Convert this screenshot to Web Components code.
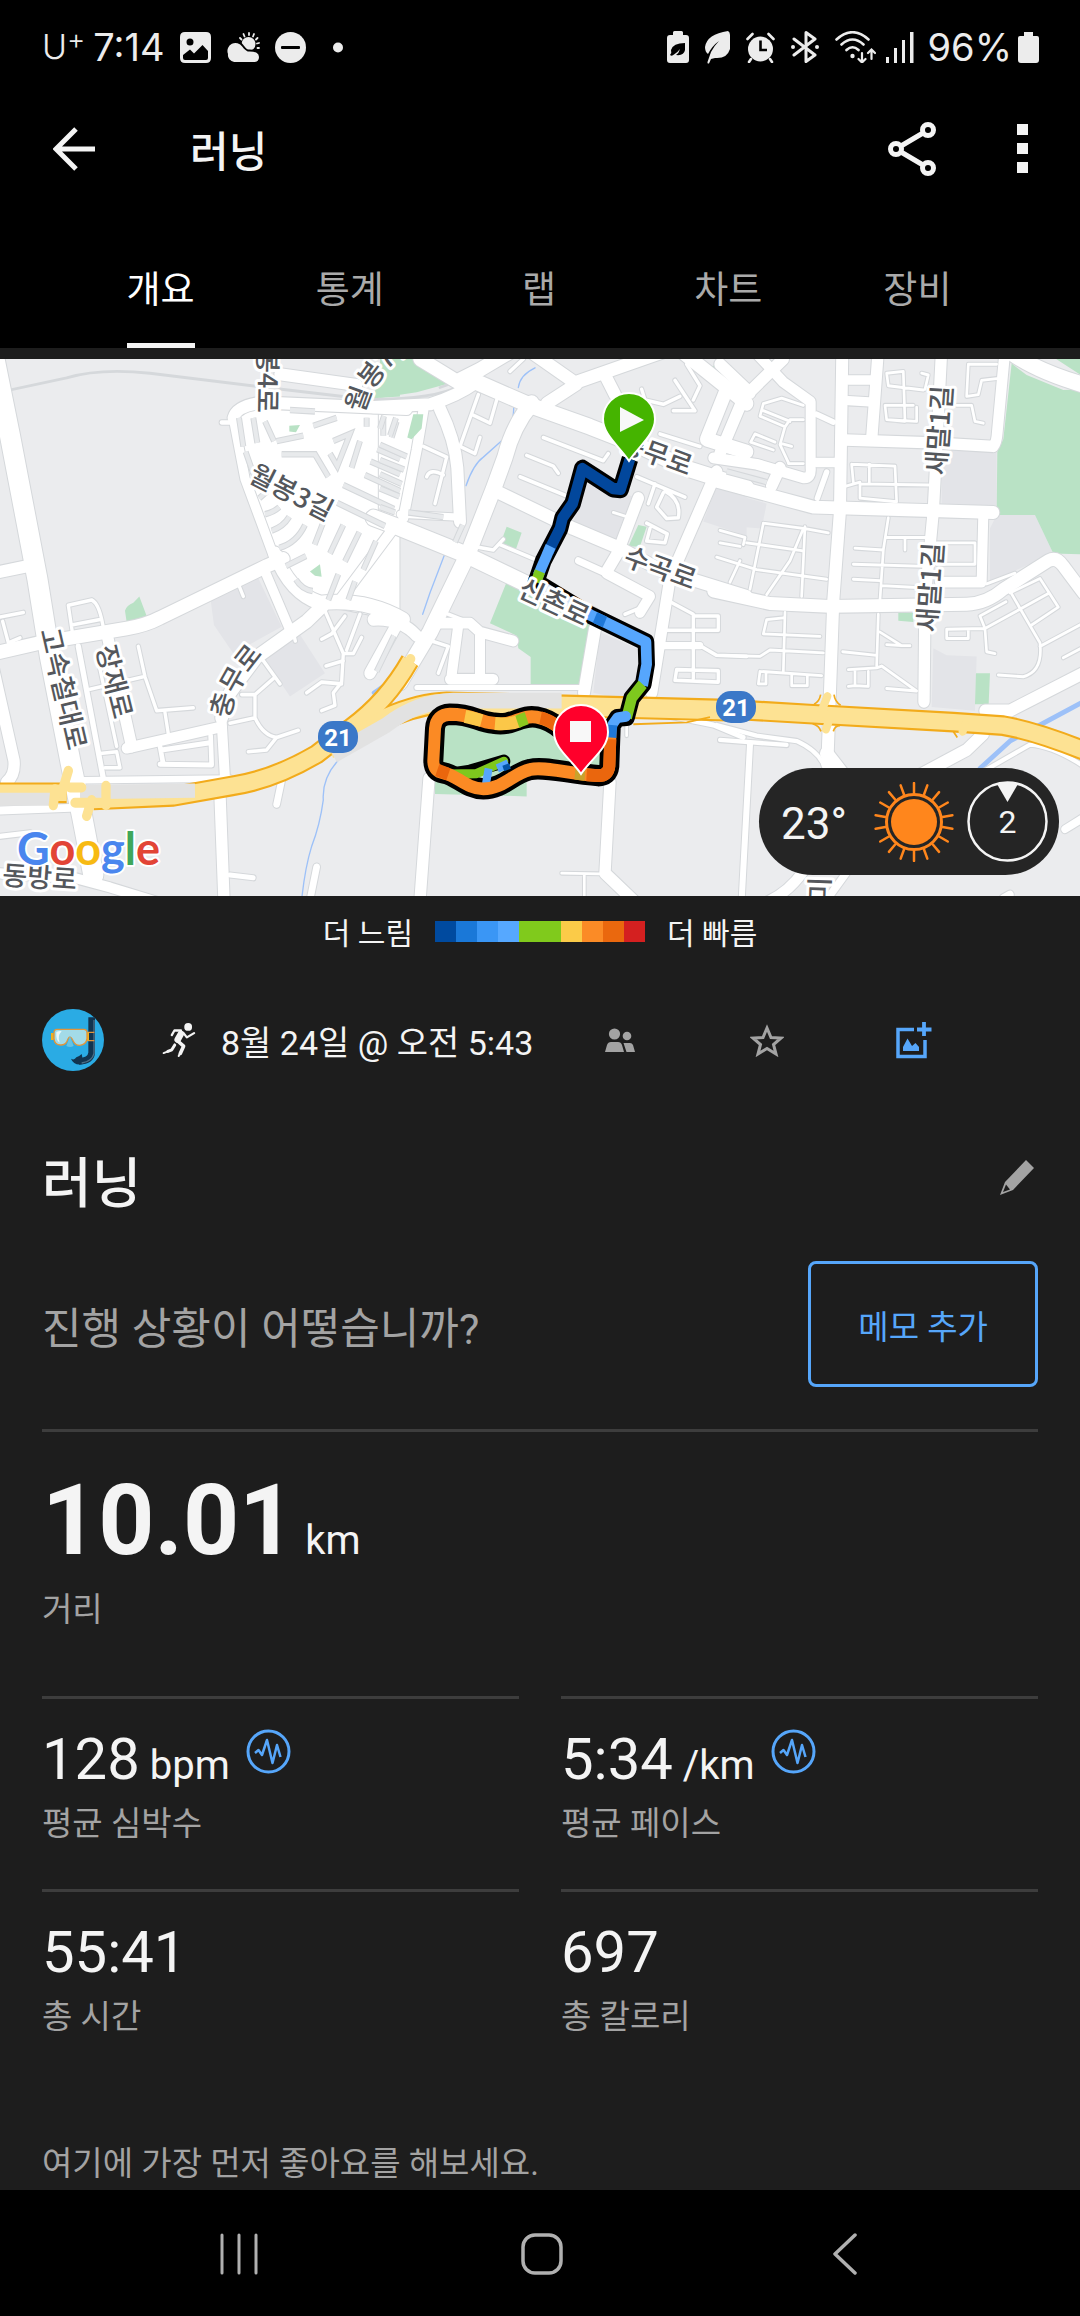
<!DOCTYPE html>
<html lang="ko">
<head>
<meta charset="utf-8">
<meta name="viewport" content="width=device-width, initial-scale=1">
<title>러닝</title>
<style>
    :root {
        --surface: #1d1d1d;
        --text: #f4f4f4;
        --muted: #a3a3a3;
        --accent: #56a6fa;
        --rule: #3d3d3d;
        --gutter: 42px;
    }

    body {
        margin: 0;
        background: #000;
        color: var(--text);
        font-family: Roboto, "Noto Sans CJK KR", sans-serif;
    }
</style>
</head>
<body>
<activity-screen></activity-screen>

<script>
/**
 * Register a custom element from a block of shadow markup.
 * @param {string} name - Tag name
 * @param {string} html - Styles and markup of the shadow root
 */
function defineElement(name, html) {
    const template = document.createElement('template');
    template.innerHTML = html;

    customElements.define(name, class extends HTMLElement {
        constructor() {
            super();
            this.attachShadow({ mode: 'open' });
            this.shadowRoot.appendChild(template.content.cloneNode(true));
        }
    });
}

/* ---------- status bar ---------- */

defineElement('status-bar', `
    <style>
        :host {
            display: flex;
            justify-content: space-between;
            align-items: center;
            height: 94px;
            padding: 0 41px 0 42px;
            box-sizing: border-box;
            color: #ececec;
            font-family: Inter, sans-serif;
            font-size: 38px;
            line-height: 44px;
        }
        div { display: flex; align-items: center; gap: 16px; }
        .carrier { display: flex; font-size: 34px; font-weight: 300; }
        .carrier sup { font-size: 28px; line-height: 28px; }
        .left { gap: 15px; }
        .left .carrier { margin-right: -7px; }
        .level { gap: 6px; }
        .wifi { margin-right: -6px; }
        .signal { margin-right: -2px; }
        svg { display: block; fill: currentColor; }
    </style>
    <div class="left">
        <span class="carrier">U<sup>+</sup></span>
        <span>7:14</span>
        <svg width="31" height="31" viewBox="0 0 31 31">
            <path fill-rule="evenodd" d="M5 0H26Q31 0 31 5V26Q31 31 26 31H5Q0 31 0 26V5Q0 0 5 0ZM10 6.500A3.500 3.500 0 1 0 10 13.500A3.500 3.500 0 1 0 10 6.500ZM3 23V26Q3 28 5 28H26Q28 28 28 26V19L22.500 13L14 21.500L10 17.500Z"/>
        </svg>
        <svg width="34" height="31" viewBox="0 0 34 31">
            <g stroke="currentColor" stroke-width="1.800" stroke-linecap="round">
                <path d="M23 1V3M17.500 2L18.500 4.500M28 2L27 4.500M14 6L15.500 7.500M31.500 6L30 7.500M33 11L31 11.500M33 16H31.500"/>
            </g>
            <circle cx="22.500" cy="12" r="7"/>
            <path stroke="#000" stroke-width="2" d="M8 31A8 8 0 0 1 1 22A9 9 0 0 1 17 14Q20 18 22 18.500Q34 18 34 25Q34 31 28 31Z"/>
        </svg>
        <svg width="31" height="31" viewBox="0 0 31 31">
            <circle cx="15.500" cy="15.500" r="15.500"/>
            <rect x="6" y="14" width="19" height="3" rx="1" fill="#000"/>
        </svg>
        <svg width="34" height="31" viewBox="0 0 34 31"><circle cx="17" cy="15.500" r="5"/></svg>
    </div>
    <div>
        <svg width="22" height="32" viewBox="0 0 22 32">
            <path d="M6 4V1.500Q6 0 7.500 0H14.500Q16 0 16 1.500V4H19Q22 4 22 7V29Q22 32 19 32H3Q0 32 0 29V7Q0 4 3 4Z"/>
            <path fill="#000" d="M3 24Q5 22 4 19Q6 12 18 12V19Q17 25 9 24Q12 22 13 18Q10 22 7 23.500Q5 25.500 3 24Z"/>
        </svg>
        <svg width="25" height="33" viewBox="0 0 25 33">
            <path d="M23 0Q25 1 25 4V18Q22 28 10 27L6 28L4 32.500Q2 33 2.500 31L6 21Q9 15 14 10Q7 15 3 23Q0 21 0 16Q2 3 23 0Z"/>
        </svg>
        <svg width="29" height="31" viewBox="0 0 29 31">
            <circle cx="14.500" cy="17" r="12.500"/>
            <path fill="none" stroke="currentColor" stroke-width="2.600" stroke-linecap="round" d="M1.500 7L6.500 2M27.500 7L22.500 2M5 27L3 30M24 27L26 30"/>
            <path fill="none" stroke="#000" stroke-width="2.600" d="M14.500 8.500V18H21"/>
        </svg>
        <svg width="28" height="32" viewBox="0 0 28 32">
            <path fill="none" stroke="currentColor" stroke-width="3" stroke-linejoin="round" stroke-linecap="round" d="M3 8L24 24L15 30.500V1.500L24 8L3 24"/>
            <circle cx="2" cy="16" r="2"/><circle cx="26" cy="16" r="2"/>
        </svg>
        <svg class="wifi" width="41" height="32" viewBox="0 0 41 32">
            <g fill="none" stroke="currentColor" stroke-width="2.600" stroke-linecap="round">
                <path d="M1.500 8.500Q17.500 -6 33.500 8.500M6.500 13.500Q17.500 3.500 28.500 13.500M11.500 19Q17.500 13.500 23.500 19"/>
                <path stroke-width="2.200" d="M27 22V31M23.500 28L27 31.500L30.500 28M36.500 28V19M33 22L36.500 18.500L40 22"/>
            </g>
            <circle cx="17.500" cy="25" r="2.200"/>
        </svg>
        <svg class="signal" width="28" height="31" viewBox="0 0 28 31">
            <path d="M0 25H3V31H0ZM8 16H11V31H8ZM16 8H19V31H16ZM24 0H27.500V31H24Z"/>
        </svg>
        <div class="level">
            <span>96%</span>
            <svg width="21" height="31" viewBox="0 0 21 31">
                <path d="M6 4V0H15V4H19Q21 4 21 6V28Q21 31 18 31H3Q0 31 0 28V6Q0 4 2 4Z"/>
            </svg>
        </div>
    </div>
`);

/* ---------- app bar and tabs ---------- */

class IconButton extends HTMLElement {
    constructor() {
        super();
        this.attachShadow({ mode: 'open' });
        this.shadowRoot.innerHTML = `
            <style>
                :host { display: block; }
                button {
                    display: flex;
                    justify-content: center;
                    align-items: center;
                    width: 100%;
                    height: 100%;
                    margin: 0;
                    padding: 0;
                    border: 0;
                    background: none;
                    color: inherit;
                    cursor: pointer;
                }
            </style>
            <button type="button" aria-label="${this.getAttribute('label') || ''}"><slot></slot></button>
        `;
    }
}

defineElement('app-bar', `
    <style>
        :host {
            display: flex;
            align-items: center;
            height: 110px;
            padding: 0 14px 0 24px;
        }
        icon-button { width: 100px; height: 100px; }
        icon-button:last-of-type { width: 87px; }
        .share { margin-right: 17px; }
        h1 {
            flex: 1;
            margin: 0 0 0 66px;
            padding-top: 8px;
            font-size: 42px;
            line-height: 50px;
            font-weight: 500;
        }
    </style>
    <icon-button label="뒤로">
        <svg width="42" height="44" viewBox="0 0 42 44" fill="none" stroke="currentColor" stroke-width="5"><path d="M42 22H4M23 2L3 22L23 42"/></svg>
    </icon-button>
    <h1><slot></slot></h1>
    <icon-button label="공유" class="share">
        <svg width="48" height="54" viewBox="0 0 48 54" fill="none" stroke="currentColor" stroke-width="5">
            <circle cx="8" cy="27" r="5.500"/><circle cx="40" cy="8" r="5.500"/><circle cx="40" cy="46" r="5.500"/>
            <path d="M13 24L35 11M13 30L35 43"/>
        </svg>
    </icon-button>
    <icon-button label="더보기">
        <svg width="12" height="50" viewBox="0 0 12 50" fill="currentColor"><path d="M0 0H11V11H0ZM0 19H11V30H0ZM0 38H11V49H0Z"/></svg>
    </icon-button>
`);

defineElement('tab-item', `
    <style>
        :host { display: flex; flex: 1; justify-content: center; color: #aaa; }
        :host([selected]) { color: #fff; }
        button {
            height: 120px;
            margin: 0;
            padding: 10px 0 0;
            border: 0;
            border-bottom: 5px solid transparent;
            background: none;
            color: inherit;
            font: inherit;
            font-size: 37px;
            line-height: 44px;
            cursor: pointer;
        }
        :host([selected]) button { border-bottom-color: #f4f4f4; }
    </style>
    <button type="button"><slot></slot></button>
`);

defineElement('tab-strip', `
    <style>
        :host { display: block; }
        nav { display: flex; padding: 24px 68px 0 66px; }
    </style>
    <nav><slot></slot></nav>
`);

/* ---------- map data ---------- */

/**
 * The map is three survey tiles side by side. Each tile keeps its own
 * drawing units; roads are [width, path] pairs.
 */
const TILES = [
    {
        x: 0,
        built: 'M632 700L770 630L845 775L700 850L642 770ZM790 860L895 790L975 905L870 970Z',
        parks: 'M1120 135L1140 60L1200 40V130ZM375 730Q380 715 400 708L418 690L440 745L380 762ZM930 620L960 600L965 635L945 632Z',
        open: 'M690 190L780 140L1200 150V760L960 715L850 620L800 560Z',
        roads: [
            [60, 'M-22 0L30 240L112 640L150 860L215 1170L245 1300L280 1470'],
            [34, 'M-20 625L110 600'],
            [38, 'M-20 850L110 822L380 780Q440 770 480 750L800 605L850 585'],
            [34, 'M-30 850L42 1150Q46 1190 20 1210'],
            [16, 'M235 830L310 1200'],
            [34, 'M322 800L395 1110'],
            [30, 'M380 1115L665 1055'],
            [30, 'M665 1040L675 1200'],
            [34, 'M660 1245L672 1540'],
            [38, 'M665 1030L690 960L770 860L920 760L970 715'],
            [28, 'M795 620L868 780'],
            [40, 'M825 570Q870 680 960 708Q1100 695 1210 755'],
            [28, 'M700 190L735 360L822 580'],
            [34, 'M700 190Q710 155 790 147L1220 165'],
            [12, 'M665 203L695 203'],
            [34, 'M840 68L1070 98'],
            [30, 'M1020 700L1180 500'],
            [34, 'M1190 770L1110 905'],
            [18, 'M250 1205L690 1200'],
            [22, 'M-10 1290L210 1282'],
            [20, 'M845 1205L830 1272M950 1448L930 1540'],
            [14, 'M690 1470L760 1478M0 1362L90 1352M480 1160L635 1162L632 1080M485 1120L630 1100M490 1160L480 1110'],
            [28, 'M-10 1465L230 1480L330 1505L470 1545'],
            [10, 'M217 790L205 715L275 700Q300 710 312 790M215 770L300 755M0 748L70 735M8 760L25 820L60 806M415 830L435 915L470 1010L580 1002M495 1015L505 1075M270 950L430 915M350 1110L290 850'],
            [10, 'M790 870L840 935M725 965L765 965L820 920M765 965V1030Q790 1080 830 1085L895 1065M690 1045L765 1030M830 1085L800 1120L745 1125M300 1130L350 1125L360 1170L315 1170M715 655L730 690M878 785L886 815'],
            [10, 'M975 730L1030 850L1025 930L1000 960L1005 995L965 1010M920 960L965 930L1025 935M978 885L1030 870M1035 850L1060 850L1085 805M965 810L995 795L1035 745M1040 840L1080 740'],
        ],
        blocks: 'M1030 378L1182 445M1012 428L1155 493M1095 350L1200 395M1112 312L1200 348M1132 278L1200 305M970 482L944 545M1030 490L990 570M1078 510L1035 592M1128 535L1090 615M1015 628L985 700M1065 648L1045 700M795 460Q820 455 838 440M815 506Q850 495 868 467M838 554Q890 540 915 490M858 605L918 577M888 643Q905 670 938 675M778 415L800 397M717 190L730 270M737 285L765 360M760 190L772 260M870 168L945 172M845 292H945L985 355M795 200L822 255M1000 255L1050 235L1012 325L990 290M940 212L1010 190M910 240L830 255M1080 255L1055 330M1182 800L1130 900M1150 190V240M1190 200L1175 245M1100 190V215',
        rail: 'M-10 120L200 78Q300 50 450 65L800 105L1100 138Q1300 140 1380 100L1480 30',
        water: [[4, 'M1030 1135Q965 1190 970 1260Q960 1330 935 1390Q915 1450 905 1540'], [10, 'M1120 960L1150 940']],
    },
    {
        x: 380,
        built: 'M600 370L760 410L710 540L580 490ZM1010 380L1100 400V520L970 480ZM660 790L780 840L770 920L740 980L640 960Z',
        parks: 'M0 25L100 25L200 65L220 90L110 118L0 134ZM330 765L380 650L460 685L630 765L605 940L452 935V860L415 835L410 800ZM368 525L380 495L425 512L408 557L370 545ZM985 55L1020 30L1055 45L1020 78ZM775 490L800 495L780 550L745 550ZM180 1050L290 1045L370 1060L460 1045L660 1080V1170L480 1170L300 1230H240L180 1170ZM165 1195H440V1250L165 1243Z',
        open: 'M-5 160L130 160L100 300L60 480L-5 470Z',
        roads: [
            [46, 'M-20 470L60 498L250 570L440 655L640 745'],
            [36, 'M340 392L580 500L720 555L840 615L1100 690'],
            [44, 'M290 90L450 155L630 215L780 270L920 332L1100 385'],
            [46, 'M455 150Q400 210 375 300L340 390L262 575L150 790L60 930'],
            [36, 'M180 165Q225 250 232 330L240 480'],
            [34, 'M-20 160L150 152Q230 130 290 90'],
            [40, 'M120 25L230 88L300 55L400 0'],
            [36, 'M460 10L590 95L500 150M590 90L850 5M675 70L705 125'],
            [40, 'M900 0L1100 150'],
            [40, 'M1040 110L980 250L1100 285'],
            [34, 'M1010 340L870 640L815 960'],
            [34, 'M775 415L712 570L680 620'],
            [20, 'M595 590L690 630'],
            [30, 'M680 625L810 690L780 735'],
            [36, 'M645 780L612 960'],
            [30, 'M170 765L270 765L300 790L400 815M235 770L215 910M300 800V910M210 922L340 922'],
            [14, 'M110 945L610 945M790 1010L1000 1050L1090 1085'],
            [34, 'M-20 755Q60 750 110 800'],
            [20, 'M60 460L235 468'],
            [30, 'M70 470L110 280L130 170'],
            [34, 'M147 1200L120 1540M690 1210L675 1465L770 1550'],
            [8, 'M545 1465L660 1467M613 1470V1540M740 1050V1080M700 455L735 465'],
            [10, 'M490 245L670 310L685 290M440 295L520 325L535 345M420 355L590 420M785 110L795 140L850 152L900 130M885 85L945 170L880 170M840 235L960 270M770 355L915 412M825 375L805 430M855 395Q905 420 895 470L860 472L830 440L850 400M800 485L862 515L855 540L800 535L810 500'],
            [10, 'M295 125L240 270L285 290L300 245M275 180L330 205L350 140M130 270L200 300L165 430M140 355Q150 330 190 350M290 510L282 550L340 560L370 530M360 545L500 600M205 740L260 760M155 815L205 830L175 905M735 740L800 715M860 700L940 740V920M940 745L1015 745V785L850 785M890 895L1015 898V930L885 925ZM390 60L430 25'],
            [20, 'M840 828L960 828'],
            [10, 'M960 828L1010 855L1100 858M920 40L960 100L940 140'],
        ],
        blocks: 'M30 240L48 190M0 220L12 185M0 265L80 298M0 308L72 335M0 348L65 375M0 388L58 410M0 440L45 455M248 490L225 538M85 455L190 468',
        rail: 'M180 105L260 78L340 40L370 20',
        water: [[4, 'M465 50Q420 70 415 105M402 150Q400 230 370 250L310 300Q280 320 258 380M195 570L150 680L128 740']],
    },
    {
        x: 720,
        built: 'M665 280L830 285V440L665 430ZM830 462H945L1000 570L810 650V500ZM640 835L680 855L770 858L765 1010L635 1000ZM-10 390L140 430L125 500L-10 490Z',
        parks: 'M875 38L920 70L1030 112L1090 110V572L1000 570L945 462H830L832 285L850 250ZM1000 20H1090V75ZM535 735H580V762L535 758ZM768 905H810L806 992H765ZM0 35L25 50L0 78Z',
        open: '',
        roads: [
            [36, 'M367 0L360 450L340 700L322 1160'],
            [36, 'M-20 365L180 415L280 440L640 450L820 455'],
            [30, 'M-20 302L110 320L250 358Q275 360 272 330V145L190 90L110 10'],
            [34, 'M190 25L70 135L0 290M0 40L90 120'],
            [36, 'M-20 675L150 710L330 718L740 712Q800 710 850 670L985 590Q1010 578 1030 605L1090 680'],
            [34, 'M475 0L455 250'],
            [26, 'M385 84H455M385 142L460 146M290 315H345'],
            [32, 'M375 252L640 260L820 270Q830 260 832 230L855 0'],
            [34, 'M665 0L640 450L615 700L612 985'],
            [30, 'M790 460L785 650L660 650'],
            [16, 'M290 180L340 202M320 342L292 415'],
            [34, 'M795 1010L870 1010L1100 900M790 1075L740 1120L600 1190M155 380L180 330'],
            [44, 'M870 5Q950 60 1100 100'],
            [12, 'M-10 1050L110 1080L230 1095Q290 1120 310 1160M0 1092L200 1106M790 1180L930 1105Q1000 1110 1090 1165'],
            [18, 'M90 1105L65 1540'],
            [30, 'M130 1550Q200 1525 250 1460'],
            [22, 'M320 1540L390 1450M1035 1342L1090 1310M850 1535L870 1525'],
            [40, 'M320 1130L370 1190'],
            [8, 'M500 65L550 60L555 200L500 195L495 155H580M500 65L505 100L610 112M605 65L625 70L615 110M590 160V200L500 195M745 40L740 130L775 125L785 85L830 80M745 40H830M710 155H755L765 200L790 205'],
            [8, 'M130 485L255 500L325 512M130 485L90 670M255 495L245 690M250 500L210 590L140 685M80 540L245 562M70 545L75 525L0 505M60 590L30 650M-10 580L110 615L320 642M0 540L60 550'],
            [8, 'M405 555L490 560M400 600L620 606M400 642L480 646M505 470L490 560L480 700M500 525H620M555 525V560M485 660L590 665M395 320L525 325L530 425L420 415V370L370 383M395 320L400 370M448 320V370M420 375L625 378M650 540H765V600H650'],
            [8, 'M800 655L885 625M780 745L858 705M780 745L795 780L680 782V808H745V782M795 780L800 845L825 850M795 780L985 682M870 675L960 820Q970 900 910 915L835 910M870 680L960 640L1015 720L935 770M960 830L1090 765M1030 862L1090 832'],
            [8, 'M475 740L470 885M368 845L470 855M385 895L470 890L485 885L590 955L500 948M480 790L545 828L500 825M570 828H545M405 895V940L385 942M405 940L445 942V900'],
            [8, 'M195 735L190 900M190 750L140 755L130 795L300 802M0 855L120 858L150 840L310 848M120 900L305 912M120 900L115 935H138V905M215 910V940H262V912M120 185L130 150L185 135L250 155M120 185L195 215L210 195H250M130 170L210 200M195 215L180 265L205 315M165 258L105 235L92 258L160 280M185 262L215 270M205 318H250'],
        ],
        blocks: 'M20 340L140 370',
        rail: '',
        water: [[14, 'M1090 985Q990 1035 960 1050L870 1095L780 1172']],
    },
];

/** Draw one layer of every tile. */
const layer = (draw) => TILES.map((tile) =>
    `<g transform="translate(${tile.x} -9) scale(.3333 .3571)">${draw(tile)}</g>`).join('');

const strokes = (roads, extra, color) => roads.map(([w, d]) =>
    `<path d="${d}" stroke="${color}" stroke-width="${w + extra}"/>`).join('');

const shield = (x, y) => `
    <rect x="${x - 20}" y="${y - 16}" width="40" height="32" rx="15" fill="#3b78c8"/>
    <text x="${x}" y="${y + 9}" class="shield">21</text>`;

const LOOP = 'M692 1060L688 1165Q685 1192 655 1192C560 1185 490 1165 450 1175C400 1185 370 1229 310 1229C260 1229 230 1190 190 1184Q160 1180 160 1150L165 1060Q168 1022 210 1020C280 1020 290 1040 340 1045C400 1055 420 1020 470 1028Q510 1035 540 1060';
const APPROACH = 'M750 305L722 390L700 388L607 332L578 430L548 470L540 500L490 590L468 650L630 742L798 818L800 880L790 935L755 975L740 1028L712 1030L692 1060';

class RouteMap extends HTMLElement {
    constructor() {
        super();
        this.attachShadow({ mode: 'open' });
        this.shadowRoot.innerHTML = `
            <style>
                :host { display: block; position: relative; overflow: hidden; background: #ebecee; }
                svg { display: block; width: 100%; height: auto; }
                .label, .logo { paint-order: stroke; stroke: #fff; stroke-width: 6px; stroke-linejoin: round; }
                .label { font: 500 27px "Noto Sans CJK KR", sans-serif; fill: #54575c; text-anchor: middle; }
                .label.run { text-anchor: start; }
                .shield { font: 700 24px Roboto, sans-serif; fill: #fff; text-anchor: middle; }
                .logo { font: 700 45px Lato, sans-serif; stroke-width: 4px; }
                ::slotted(*) { position: absolute; right: 21px; bottom: 21px; }
            </style>
            <svg viewBox="0 0 1080 537" role="img" aria-label="경로 지도">
                ${layer((t) => `<path d="${t.built}" fill="#e3e4e8"/><path d="${t.parks}" fill="#b9e2c5"/>`)}
                <g fill="none" stroke-linecap="round" stroke-linejoin="round">
                    ${layer((t) => `<path d="${t.open}" fill="#fff" stroke="#d5d8db" stroke-width="3"/>`)}
                    ${layer((t) => strokes(t.water, 0, '#9dc1f8'))}
                    ${layer((t) => strokes(t.roads, 6, '#d5d8db'))}
                    ${layer((t) => `<path d="${t.rail}" stroke="#d5d8db" stroke-width="8"/>`)}
                    ${layer((t) => strokes(t.roads, 0, '#fff'))}
                </g>
                <g fill="none">
                    ${layer((t) => `<path d="${t.blocks}" stroke="#d5d8db" stroke-width="18"/><path d="${t.blocks}" stroke="#e8eaec" stroke-width="12"/>`)}
                </g>
                <g fill="#b9e2c5" transform="translate(0 -9) scale(.3333 .3571)">
                    <path d="M868 212L900 210L888 230L868 228ZM930 620L960 600L965 635L945 632ZM1240 180L1270 180L1265 220L1235 250L1222 245Z"/>
                </g>

                <g fill="none" stroke-linejoin="round">
                    <g transform="translate(0 -9) scale(.3333 .3571)">
                        <path stroke="#f2ab1b" stroke-width="58" d="M-20 1240H200M280 1260L520 1250L700 1220Q820 1203 950 1132L1050 1060Q1160 985 1230 870"/>
                        <path stroke="#f2ab1b" stroke-width="64" d="M1040 1100L1160 1030Q1260 990 1340 988L2240 1010"/>
                        <path stroke="#fde293" stroke-width="46" d="M-20 1240H200M280 1260L520 1250L700 1220Q820 1203 950 1132L1050 1060Q1160 985 1230 870"/>
                        <path stroke="#fde293" stroke-width="52" d="M990 1118L1060 1092L1160 1030Q1260 990 1340 988L2240 1010"/>
                        <path stroke="#e2e2e2" stroke-width="36" d="M-10 1258H160"/>
                        <path stroke="#e2e2e2" stroke-width="40" d="M240 1238L585 1234"/>
                        <path stroke="#fde293" stroke-width="28" stroke-linecap="round" d="M205 1178L185 1240M165 1230L160 1275M210 1225H245M225 1268H300M275 1260L260 1305M318 1220V1275M1210 900L1232 865"/>
                        <path stroke="#e2e2e2" stroke-width="44" d="M1000 1135L1160 1050Q1250 985 1360 982L1685 982"/>
                    </g>
                    <g transform="translate(720 -9) scale(.3333 .3571)">
                        <path stroke="#f2ab1b" stroke-width="58" d="M60 1008L280 1020L700 1042L850 1052Q950 1068 1100 1125"/>
                        <path stroke="#fde293" stroke-width="46" d="M60 1008L280 1020L700 1042L850 1052Q950 1068 1100 1125"/>
                        <path stroke="#fde293" stroke-width="24" stroke-linecap="round" d="M322 970L305 1010L330 1030L318 1062M728 1068L735 1050"/>
                        <path stroke="#f2ab1b" stroke-width="5" d="M-260 1048L-100 1043L-30 1028M282 992Q298 985 302 965M342 965Q345 985 362 995M278 1046Q298 1052 303 1068M340 1068Q345 1052 360 1052M700 1068L712 1085"/>
                    </g>
                </g>

                <g class="label">
                    <text transform="translate(258 9) rotate(91)">월봉4로</text>
                    <text transform="translate(287 142) rotate(27)">월봉3길</text>
                    <text transform="translate(54 332) rotate(77)">고속철대로</text>
                    <text transform="translate(105 325) rotate(76)">장재로</text>
                    <text transform="translate(39 528) rotate(4)">동방로</text>
                    <text transform="translate(653 104) rotate(20)">충무로</text>
                    <text transform="translate(657 218) rotate(20)">수곡로</text>
                    <text transform="translate(949 72) rotate(-86)">새말1길</text>
                    <text transform="translate(940 229) rotate(-86)">새말1길</text>
                    <text transform="translate(829 543) rotate(-88)">배미</text>
                </g>
                <path id="chungmu" fill="none" d="M230 360Q232 330 266 292"/>
                <path id="wolbong" fill="none" d="M364 55Q370 20 416 -14"/>
                <text class="label run"><textPath href="#chungmu">충무로</textPath></text>
                <text class="label run"><textPath href="#wolbong">월봉7길</textPath></text>
                ${shield(338, 378)}
                ${shield(736, 348)}
                <text class="logo" x="17" y="506"><tspan fill="#4a86ee">G</tspan><tspan fill="#e24436">o</tspan><tspan fill="#f7ba13">o</tspan><tspan fill="#4a86ee">g</tspan><tspan fill="#3fa75b">l</tspan><tspan fill="#e24436">e</tspan></text>

                <g transform="translate(380 -9) scale(.3333 .3571)" fill="none" stroke-linejoin="round">
                    <g stroke="#000">
                        <path stroke-width="50" d="${APPROACH}"/>
                        <path stroke-width="60" d="${LOOP}"/>
                        <path stroke-width="38" stroke-linecap="round" d="M215 1188L270 1180L372 1152"/>
                    </g>
                    <g stroke-width="32" stroke="#7ec81e">
                        <path stroke-width="26" stroke-linecap="round" d="M200 1188L290 1186L372 1152"/>
                        <path stroke="#56a6fd" stroke-width="24" d="M352 1172L385 1158M318 1215L326 1172"/>
                        <path stroke="#0453a8" stroke-width="16" d="M370 1172L390 1165"/>
                        <path stroke="#02479c" d="M750 305L722 390L700 388L607 332L578 430L548 470L540 500L505 565"/>
                        <path stroke="#56a6fd" d="M512 550L474 632"/>
                        <path d="M480 620L468 650"/>
                        <path stroke="#cfe0f5" d="M478 658L630 742"/>
                        <path stroke="#56a6fd" d="M620 737L798 818L800 880L788 940"/>
                        <path stroke="#1f78d8" d="M645 749L675 762"/>
                        <path d="M788 936L755 975L740 1030"/>
                    </g>
                    <path stroke="#fb8a24" stroke-width="36" d="${LOOP}"/>
                    <path stroke="#fbc748" stroke-width="36" d="M255 1026Q280 1031 305 1038M345 1046Q390 1050 420 1038"/>
                    <path stroke="#8cc820" stroke-width="36" d="M412 1041L440 1031"/>
                    <path stroke="#ea660d" stroke-width="36" d="M482 1030Q510 1036 540 1060M691 1090L688 1165Q685 1192 655 1192L620 1190M172 1176L205 1188"/>
                    <path stroke="#c9a22c" stroke-width="34" d="M585 1186L615 1189"/>
                    <path stroke="#56a6fd" stroke-width="30" stroke-linecap="round" d="M738 1026L712 1030L698 1048"/>
                    <path stroke="#1f78d8" stroke-width="34" d="M695 1050L692 1085"/>
                </g>
                <text class="label" transform="translate(550 252) rotate(25)">신촌로</text>

                <g stroke="#fff" stroke-width="2">
                    <path fill="#45b400" d="M629 102C620 88 603 76 603 60A26 26 0 0 1 655 60C655 76 638 88 629 102Z"/>
                    <path fill="#ff002b" d="M581 415C572 401 554 390 554 373A27 27 0 0 1 608 373C608 390 590 401 581 415Z"/>
                </g>
                <path fill="#f8f8f8" d="M620 48V73L644 61ZM570 362H591V383H570Z"/>
            </svg>
            <slot></slot>
        `;
    }
}

customElements.define('route-map', RouteMap);

/* ---------- weather ---------- */

const rays = Array.from({ length: 18 }, (_, i) =>
    `<path d="M40 1V11" transform="rotate(${i * 20} 40 40)"/>`).join('');

defineElement('weather-badge', `
    <style>
        :host {
            display: flex;
            align-items: center;
            gap: 13px;
            height: 107px;
            padding: 0 11px 0 22px;
            border-radius: 54px;
            background: #252525;
            font-size: 44px;
            line-height: 52px;
        }
        .temp { width: 80px; padding-top: 4px; }
        svg { display: block; }
        text { font-size: 32px; text-anchor: middle; fill: currentColor; }
    </style>
    <span class="temp">23°</span>
    <svg width="80" height="80" viewBox="0 0 80 80">
        <g stroke="#ff861c" stroke-width="2.500" stroke-linecap="round">${rays}</g>
        <circle cx="40" cy="40" r="27.500" fill="#252525" stroke="#ff861c" stroke-width="3"/>
        <circle cx="40" cy="40" r="23" fill="#ff861c"/>
    </svg>
    <svg width="81" height="81" viewBox="0 0 81 81">
        <circle cx="40.500" cy="40.500" r="39" fill="none" stroke="currentColor" stroke-width="2.500"/>
        <path d="M30 3Q40 0 51 3L40.500 21Z" fill="currentColor"/>
        <text x="40.500" y="52">2</text>
    </svg>
`);

defineElement('pace-legend', `
    <style>
        :host {
            display: flex;
            justify-content: center;
            align-items: center;
            gap: 22px;
            height: 70px;
            font-size: 30px;
            line-height: 36px;
        }
        .scale { display: flex; height: 21px; }
        .scale i { width: 21px; }
        ::slotted(span) { padding-top: 5px; }
    </style>
    <slot name="slow"></slot>
    <span class="scale">
        <i style="background:#004a9f"></i><i style="background:#1a78d8"></i><i style="background:#3a96f5"></i><i style="background:#56a8ff"></i><i style="background:#80ca1c"></i><i style="background:#80ca1c"></i><i style="background:#fbcb48"></i><i style="background:#fb8b26"></i><i style="background:#ea680e"></i><i style="background:#d42020"></i>
    </span>
    <slot name="fast"></slot>
`);

/* ---------- activity details ---------- */

defineElement('activity-meta', `
    <style>
        :host {
            display: flex;
            align-items: center;
            height: 148px;
            padding: 0 93px 0 var(--gutter);
            font-size: 34px;
            line-height: 40px;
        }
        .avatar { margin-right: 58px; }
        .runner { margin-right: 25px; }
        time { flex: 1; white-space: nowrap; padding-top: 6px; }
        svg { display: block; flex: none; }
        icon-button { width: 147px; height: 88px; color: var(--muted); }
        .photo { color: var(--accent); }
    </style>
    <svg class="avatar" width="62" height="62" viewBox="39 27 186 186">
        <circle cx="132" cy="120" r="93" fill="#2aabe4"/>
        <path d="M188 52V158Q186 182 150 184" fill="none" stroke="#12344f" stroke-width="20"/>
        <path d="M126 176Q136 182 142 172Q150 170 158 162L164 192Q134 198 126 176Z" fill="#12344f"/>
        <path d="M195 60V160Q190 184 158 189" fill="none" stroke="#4d6f87" stroke-width="4"/>
        <path d="M176 97H196M176 122H196" stroke="#e2953a" stroke-width="4"/>
        <path d="M66 99H74V120H66ZM172 97H180V122H172Z" fill="#f2b01e"/>
        <path d="M84 88H164Q174 88 174 98V116Q172 134 152 136Q138 136 132 122Q122 100 114 124Q108 136 94 135Q76 133 75 116V98Q75 88 84 88Z" fill="#a3dbe8" stroke="#e2953a" stroke-width="4"/>
        <path d="M123 108L112 138Q123 144 134 138Z" fill="#63c3e6"/>
        <path d="M82 96Q92 92 98 94Q84 108 92 128Q80 122 82 96Z" fill="#e8f8fb"/>
    </svg>
    <svg class="runner" width="34" height="36" viewBox="400 64 100 110" fill="none" stroke="currentColor" stroke-linecap="round" stroke-linejoin="round">
        <circle cx="478" cy="79" r="12" fill="currentColor" stroke="none"/>
        <path stroke-width="7" d="M428 104L436 90L456 90M464 98L474 111L496 98"/>
        <path stroke-width="20" d="M456 100L446 118"/>
        <path stroke-width="11" d="M446 122L464 138L454 160"/>
        <path stroke-width="6" d="M458 150L449 168M418 153L403 159"/>
        <path stroke-width="9" d="M437 134L428 149L416 154"/>
    </svg>
    <time datetime="2024-08-24T05:43"><slot></slot></time>
    <icon-button label="공개 범위">
        <svg width="30" height="24" viewBox="0 0 30 24" fill="currentColor">
            <circle cx="9.500" cy="6" r="5.600"/><circle cx="22" cy="8" r="4.300"/>
            <path d="M0 24L2 17Q3 14 6 14H13Q16 14 17 17L19 24ZM18.500 15H25Q27 15 28 17L30 24H21.500Z"/>
        </svg>
    </icon-button>
    <icon-button label="즐겨찾기">
        <svg width="34" height="33" viewBox="0 0 34 33" fill="none" stroke="currentColor" stroke-width="3">
            <path d="M17 4L21 13.500L31 14L23.500 20.500L26 30L17 24.500L8 30L10.500 20.500L3 14L13 13.500Z"/>
        </svg>
    </icon-button>
    <icon-button label="사진 추가" class="photo">
        <svg width="36" height="37" viewBox="0 0 36 37" fill="none" stroke="currentColor">
            <path stroke-width="3.500" d="M18 7.500H2V34.500H29V18"/>
            <path stroke-width="3.800" d="M28 0V14M21 7.500H35.500"/>
            <path stroke="none" fill="currentColor" d="M7 29V25L11.500 16.500L16 24L19.500 21L23 25V29Z"/>
        </svg>
    </icon-button>
`);

defineElement('activity-title', `
    <style>
        :host {
            display: flex;
            align-items: center;
            justify-content: space-between;
            height: 138px;
            padding: 0 22px 0 var(--gutter);
        }
        h2 { margin: 0; padding-top: 4px; font-size: 54px; line-height: 64px; font-weight: 500; }
        icon-button { width: 82px; height: 82px; margin-bottom: 12px; color: var(--muted); }
    </style>
    <h2><slot></slot></h2>
    <icon-button label="편집">
        <svg width="36" height="37" viewBox="0 0 36 37" fill="currentColor">
            <path fill-rule="evenodd" d="M27 1L35 9L14 31L1 36L6 23ZM7 25.500L4 33L11 30.500Z"/>
        </svg>
    </icon-button>
`);

defineElement('note-prompt', `
    <style>
        :host {
            display: flex;
            align-items: center;
            justify-content: space-between;
            margin: 0 var(--gutter);
            padding: 9px 0 42px;
            border-bottom: 3px solid var(--rule);
            color: var(--muted);
            font-size: 43px;
            line-height: 52px;
        }
        .question { padding-top: 10px; }
        button {
            height: 126px;
            padding: 7px 47px 0;
            border: 3px solid var(--accent);
            border-radius: 8px;
            background: none;
            color: var(--accent);
            font: inherit;
            font-size: 33px;
            line-height: 40px;
            cursor: pointer;
        }
    </style>
    <span class="question"><slot></slot></span>
    <button type="button"><slot name="action"></slot></button>
`);

defineElement('distance-total', `
    <style>
        :host { display: block; padding: 39px var(--gutter) 66px; }
        .value { font-size: 40px; line-height: 40px; }
        b { font-size: 98px; line-height: 100px; font-weight: 700; }
        .label { margin-top: 19px; color: var(--muted); font-size: 33px; line-height: 40px; }
    </style>
    <div class="value"><b><slot name="value"></slot></b> <slot name="unit"></slot></div>
    <div class="label"><slot></slot></div>
`);

/**
 * StatTile - one figure of the summary grid
 * Attributes: value, unit, label, chart (shows the chart shortcut)
 */
class StatTile extends HTMLElement {
    constructor() {
        super();
        this.attachShadow({ mode: 'open' });
        const unit = this.getAttribute('unit');
        const chart = this.hasAttribute('chart');

        this.shadowRoot.innerHTML = `
            <style>
                :host { display: block; padding: 28px 0 45px; border-top: 3px solid var(--rule); }
                .row { display: flex; gap: 16px; }
                .value { font-size: 58px; line-height: 64px; white-space: nowrap; }
                .unit { font-size: 40px; line-height: 40px; }
                .label { margin-top: 13px; color: var(--muted); font-size: 33px; line-height: 40px; }
                icon-button { width: 45px; height: 45px; margin-top: 2px; color: var(--accent); }
            </style>
            <div class="row">
                <div class="value">${this.getAttribute('value')}${unit ? `<span class="unit"> ${unit}</span>` : ''}</div>
                ${chart ? `<icon-button label="차트 보기">
                    <svg width="45" height="45" viewBox="0 0 45 45" fill="none" stroke="currentColor" stroke-width="3">
                        <circle cx="22.500" cy="22.500" r="20.500"/>
                        <path stroke-width="2.500" stroke-linejoin="round" d="M9 24L12.500 21L16 26L21 11L26.500 34L31 16L34.500 28"/>
                    </svg>
                </icon-button>` : ''}
            </div>
            <div class="label">${this.getAttribute('label')}</div>
        `;
    }
}

defineElement('system-nav', `
    <style>
        :host { display: flex; height: 126px; padding: 0 84px 0 88px; color: #b0b0b0; }
        icon-button { flex: 1; padding-top: 2px; }
    </style>
    <icon-button label="최근 앱">
        <svg width="40" height="42" viewBox="0 0 40 42" fill="none" stroke="currentColor" stroke-width="3" stroke-linecap="round"><path d="M3 2V40M20 2V40M37 2V40"/></svg>
    </icon-button>
    <icon-button label="홈">
        <svg width="42" height="42" viewBox="0 0 42 42" fill="none" stroke="currentColor" stroke-width="3.500"><rect x="2" y="2" width="38" height="38" rx="12"/></svg>
    </icon-button>
    <icon-button label="뒤로">
        <svg width="24" height="42" viewBox="0 0 24 42" fill="none" stroke="currentColor" stroke-width="3.500" stroke-linecap="round" stroke-linejoin="round"><path d="M22 2L2 21L22 40"/></svg>
    </icon-button>
`);

/* ---------- screen ---------- */

defineElement('activity-screen', `
    <style>
        :host { display: flex; flex-direction: column; min-height: 100vh; }
        main { flex: 1; padding-top: 11px; background: var(--surface); }
        .stats {
            display: grid;
            grid-template-columns: 1fr 1fr;
            column-gap: 42px;
            padding: 0 var(--gutter);
        }
        .likes {
            margin: 62px var(--gutter) 0;
            padding-bottom: 6px;
            color: var(--muted);
            font-size: 33px;
            line-height: 40px;
        }
    </style>
    <status-bar></status-bar>
    <app-bar>러닝</app-bar>
    <tab-strip>
        <tab-item selected>개요</tab-item>
        <tab-item>통계</tab-item>
        <tab-item>랩</tab-item>
        <tab-item>차트</tab-item>
        <tab-item>장비</tab-item>
    </tab-strip>
    <main>
        <route-map><weather-badge></weather-badge></route-map>
        <pace-legend><span slot="slow">더 느림</span><span slot="fast">더 빠름</span></pace-legend>
        <activity-meta>8월 24일 @ 오전 5:43</activity-meta>
        <activity-title>러닝</activity-title>
        <note-prompt>진행 상황이 어떻습니까?<span slot="action">메모 추가</span></note-prompt>
        <distance-total><span slot="value">10.01</span><span slot="unit">km</span>거리</distance-total>
        <div class="stats">
            <stat-tile value="128" unit="bpm" label="평균 심박수" chart></stat-tile>
            <stat-tile value="5:34" unit="/km" label="평균 페이스" chart></stat-tile>
            <stat-tile value="55:41" label="총 시간"></stat-tile>
            <stat-tile value="697" label="총 칼로리"></stat-tile>
        </div>
        <p class="likes">여기에 가장 먼저 좋아요를 해보세요.</p>
    </main>
    <system-nav></system-nav>
`);

// Defined last: both read their attributes when the tree above is upgraded
customElements.define('icon-button', IconButton);
customElements.define('stat-tile', StatTile);
</script>
</body>
</html>
